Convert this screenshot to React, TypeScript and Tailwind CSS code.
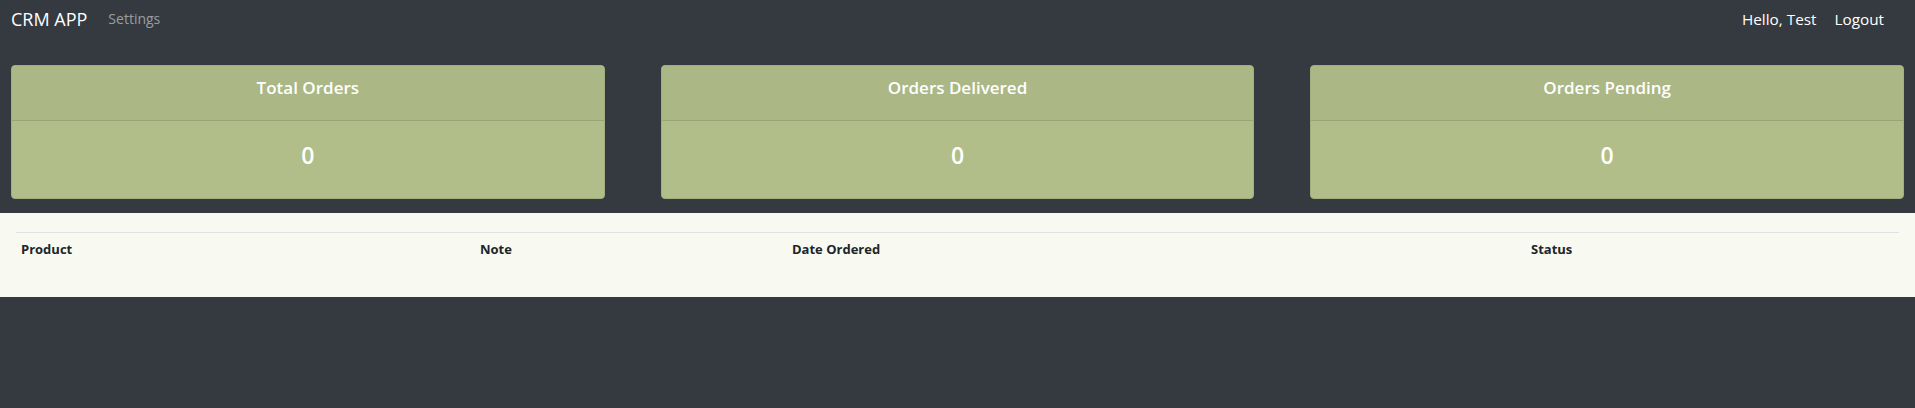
import React from 'react';

const stats = [
  { title: 'Total Orders', value: 0 },
  { title: 'Orders Delivered', value: 0 },
  { title: 'Orders Pending', value: 0 },
];

const columns = [
  { label: 'Product', w: 'w-[459px]' },
  { label: 'Note', w: 'w-[312px]' },
  { label: 'Date Ordered', w: 'w-[739px]' },
  { label: 'Status', w: '' },
];

const StatCard: React.FC<{ title: string; value: number }> = ({ title, value }) => (
  <div className="flex-1 flex flex-col h-[134px] rounded-[4px] border border-[#a3ae7e] bg-[#b1be8a] overflow-hidden">
    <div className="h-[55px] bg-[#abb785] border-b border-[#98a475] pt-[11px] text-center">
      <h5 className="text-[17px] leading-[22px] font-semibold text-white">{title}</h5>
    </div>
    <div className="flex-1 pt-[18px] text-center">
      <h3 className="text-[23px] leading-[32px] font-semibold text-white">{value}</h3>
    </div>
  </div>
);

export default function App() {
  return (
    <div className="min-h-[408px] bg-[#343a40] font-['Open_Sans',sans-serif]">
      {/* navbar */}
      <nav className="h-[37px] flex items-center justify-between pl-[11px] pr-[31px]">
        <div className="flex items-center">
          <a className="text-[18px] text-white leading-[24px]">CRM APP</a>
          <a className="ml-[21px] text-[14px] text-white/50 leading-[24px]">Settings</a>
        </div>
        <div className="flex items-center gap-[18px] text-[15.3px] text-white leading-[24px]">
          <span>Hello, Test</span>
          <a>Logout</a>
        </div>
      </nav>

      <div className="flex gap-[56px] px-[11px] pt-[28px]">
        {stats.map((s) => (
          <StatCard key={s.title} title={s.title} value={s.value} />
        ))}
      </div>

      {/* orders table */}
      <div className="mt-[14px] bg-[#f8f9f1] pt-[19px] pb-[32px] px-[16px]">
        <table className="w-full border-collapse text-[#212529]">
          <thead>
            <tr className="border-t border-[#dee2e6]">
              {columns.map((c) => (
                <th
                  key={c.label}
                  className={`${c.w} text-left px-[5px] pt-[6px] pb-[5px] text-[13px] leading-[21px] font-bold`}
                >
                  {c.label}
                </th>
              ))}
            </tr>
          </thead>
          <tbody></tbody>
        </table>
      </div>
    </div>
  );
}
